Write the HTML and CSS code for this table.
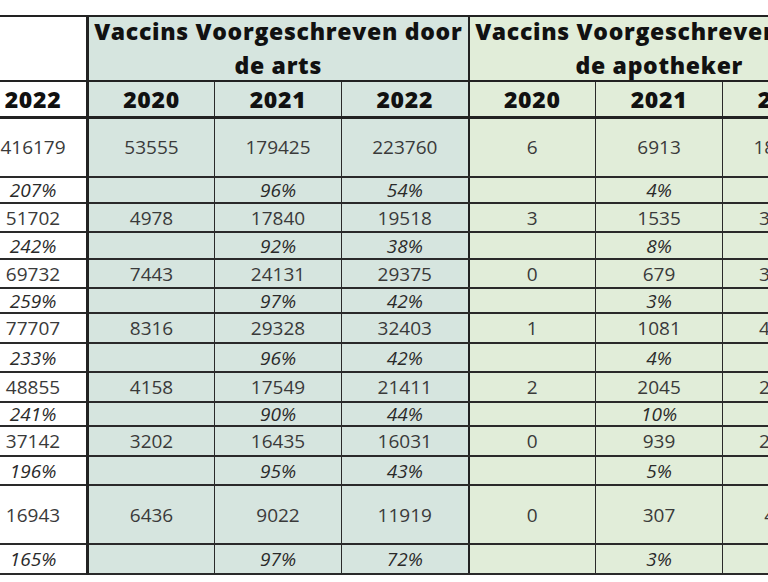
FILE: index.html
```html
<!DOCTYPE html>
<html lang="nl">
<head>
<meta charset="utf-8">
<title>Vaccins</title>
<link rel="stylesheet" href="styles.css">
</head>
<body>
<table class="vac">
  <colgroup>
    <col class="c-first">
    <col class="c"><col class="c"><col class="c">
    <col class="c"><col class="c"><col class="c">
  </colgroup>
  <thead>
    <tr class="r-group">
      <th class="first"></th>
      <th colspan="3" class="arts grp"><div class="grp-text">Vaccins Voorgeschreven door<br>de arts</div></th>
      <th colspan="3" class="apo grp"><div class="grp-text">Vaccins Voorgeschreven door<br>de apotheker</div></th>
    </tr>
    <tr class="r-years">
      <th class="first">2022</th>
      <th class="arts">2020</th><th class="arts">2021</th><th class="arts gend">2022</th>
      <th class="apo">2020</th><th class="apo">2021</th><th class="apo">2022</th>
    </tr>
  </thead>
  <tbody>
    <tr class="v"><td class="first">416179</td><td class="arts">53555</td><td class="arts">179425</td><td class="arts gend">223760</td><td class="apo">6</td><td class="apo">6913</td><td class="apo">186214</td></tr>
    <tr class="p"><td class="first">207%</td><td class="arts"></td><td class="arts">96%</td><td class="arts gend">54%</td><td class="apo"></td><td class="apo">4%</td><td class="apo">46%</td></tr>
    <tr class="v"><td class="first">51702</td><td class="arts">4978</td><td class="arts">17840</td><td class="arts gend">19518</td><td class="apo">3</td><td class="apo">1535</td><td class="apo">32184</td></tr>
    <tr class="p"><td class="first">242%</td><td class="arts"></td><td class="arts">92%</td><td class="arts gend">38%</td><td class="apo"></td><td class="apo">8%</td><td class="apo">62%</td></tr>
    <tr class="v"><td class="first">69732</td><td class="arts">7443</td><td class="arts">24131</td><td class="arts gend">29375</td><td class="apo">0</td><td class="apo">679</td><td class="apo">38357</td></tr>
    <tr class="p"><td class="first">259%</td><td class="arts"></td><td class="arts">97%</td><td class="arts gend">42%</td><td class="apo"></td><td class="apo">3%</td><td class="apo">58%</td></tr>
    <tr class="v"><td class="first">77707</td><td class="arts">8316</td><td class="arts">29328</td><td class="arts gend">32403</td><td class="apo">1</td><td class="apo">1081</td><td class="apo">45304</td></tr>
    <tr class="p"><td class="first">233%</td><td class="arts"></td><td class="arts">96%</td><td class="arts gend">42%</td><td class="apo"></td><td class="apo">4%</td><td class="apo">58%</td></tr>
    <tr class="v"><td class="first">48855</td><td class="arts">4158</td><td class="arts">17549</td><td class="arts gend">21411</td><td class="apo">2</td><td class="apo">2045</td><td class="apo">27444</td></tr>
    <tr class="p"><td class="first">241%</td><td class="arts"></td><td class="arts">90%</td><td class="arts gend">44%</td><td class="apo"></td><td class="apo">10%</td><td class="apo">56%</td></tr>
    <tr class="v"><td class="first">37142</td><td class="arts">3202</td><td class="arts">16435</td><td class="arts gend">16031</td><td class="apo">0</td><td class="apo">939</td><td class="apo">21111</td></tr>
    <tr class="p"><td class="first">196%</td><td class="arts"></td><td class="arts">95%</td><td class="arts gend">43%</td><td class="apo"></td><td class="apo">5%</td><td class="apo">57%</td></tr>
    <tr class="v"><td class="first">16943</td><td class="arts">6436</td><td class="arts">9022</td><td class="arts gend">11919</td><td class="apo">0</td><td class="apo">307</td><td class="apo">4624</td></tr>
    <tr class="p"><td class="first">165%</td><td class="arts"></td><td class="arts">97%</td><td class="arts gend">72%</td><td class="apo"></td><td class="apo">3%</td><td class="apo">28%</td></tr>
  </tbody>
</table>
</body>
</html>
```
FILE: styles.css
```css
html, body {
  margin: 0;
  padding: 0;
  overflow: hidden;
  background: #ffffff;
}

body {
  font-family: "Open Sans", "Noto Sans", sans-serif;
  color: #333333;
  padding-top: 15px;
}

.vac {
  border-collapse: collapse;
  table-layout: fixed;
  width: 870px;
  margin-left: -21px;
  border-top: 2px solid #222;
}

.c-first { width: 108px; }
.c { width: 127px; }

.vac th,
.vac td {
  border: 1px solid #2a2a2a;
  text-align: center;
  vertical-align: middle;
  padding: 0;
  white-space: nowrap;
  overflow: visible;
}

.vac th {
  color: #111;
  font-weight: 800;
  font-size: 23px;
  letter-spacing: 0.7px;
  line-height: 24px;
}

.vac td {
  font-size: 19px;
  line-height: 20px;
  color: #3a3a3a;
}

.grp-text {
  line-height: 34px;
  margin: -5px 0 -3px;
}

.first { background: #ffffff; border-right: 3px solid #222 !important; }
.arts { background: #d6e5df; }
.apo { background: #e1edd9; }
.gend { border-right: 2px solid #222 !important; }
.arts.grp { border-right: 2px solid #222 !important; }

.r-group { height: 65px; }
.r-group th { border-bottom: 2px solid #222; }
.r-years { height: 36px; }
.r-years th { border-bottom: 3px solid #222; }

.vac tbody td { border-bottom: 2px solid #2a2a2a; }
.vac tr.p td { font-style: italic; color: #2a2a2a; }

.vac tbody tr:nth-child(1) { height: 60px; }
.vac tbody tr:nth-child(2) { height: 26px; }
.vac tbody tr:nth-child(3) { height: 29px; }
.vac tbody tr:nth-child(4) { height: 27px; }
.vac tbody tr:nth-child(5) { height: 29px; }
.vac tbody tr:nth-child(6) { height: 25px; }
.vac tbody tr:nth-child(7) { height: 30px; }
.vac tbody tr:nth-child(8) { height: 29px; }
.vac tbody tr:nth-child(9) { height: 30px; }
.vac tbody tr:nth-child(10) { height: 24px; }
.vac tbody tr:nth-child(11) { height: 30px; }
.vac tbody tr:nth-child(12) { height: 29px; }
.vac tbody tr:nth-child(13) { height: 59px; }
.vac tbody tr:nth-child(14) { height: 30px; }
```
